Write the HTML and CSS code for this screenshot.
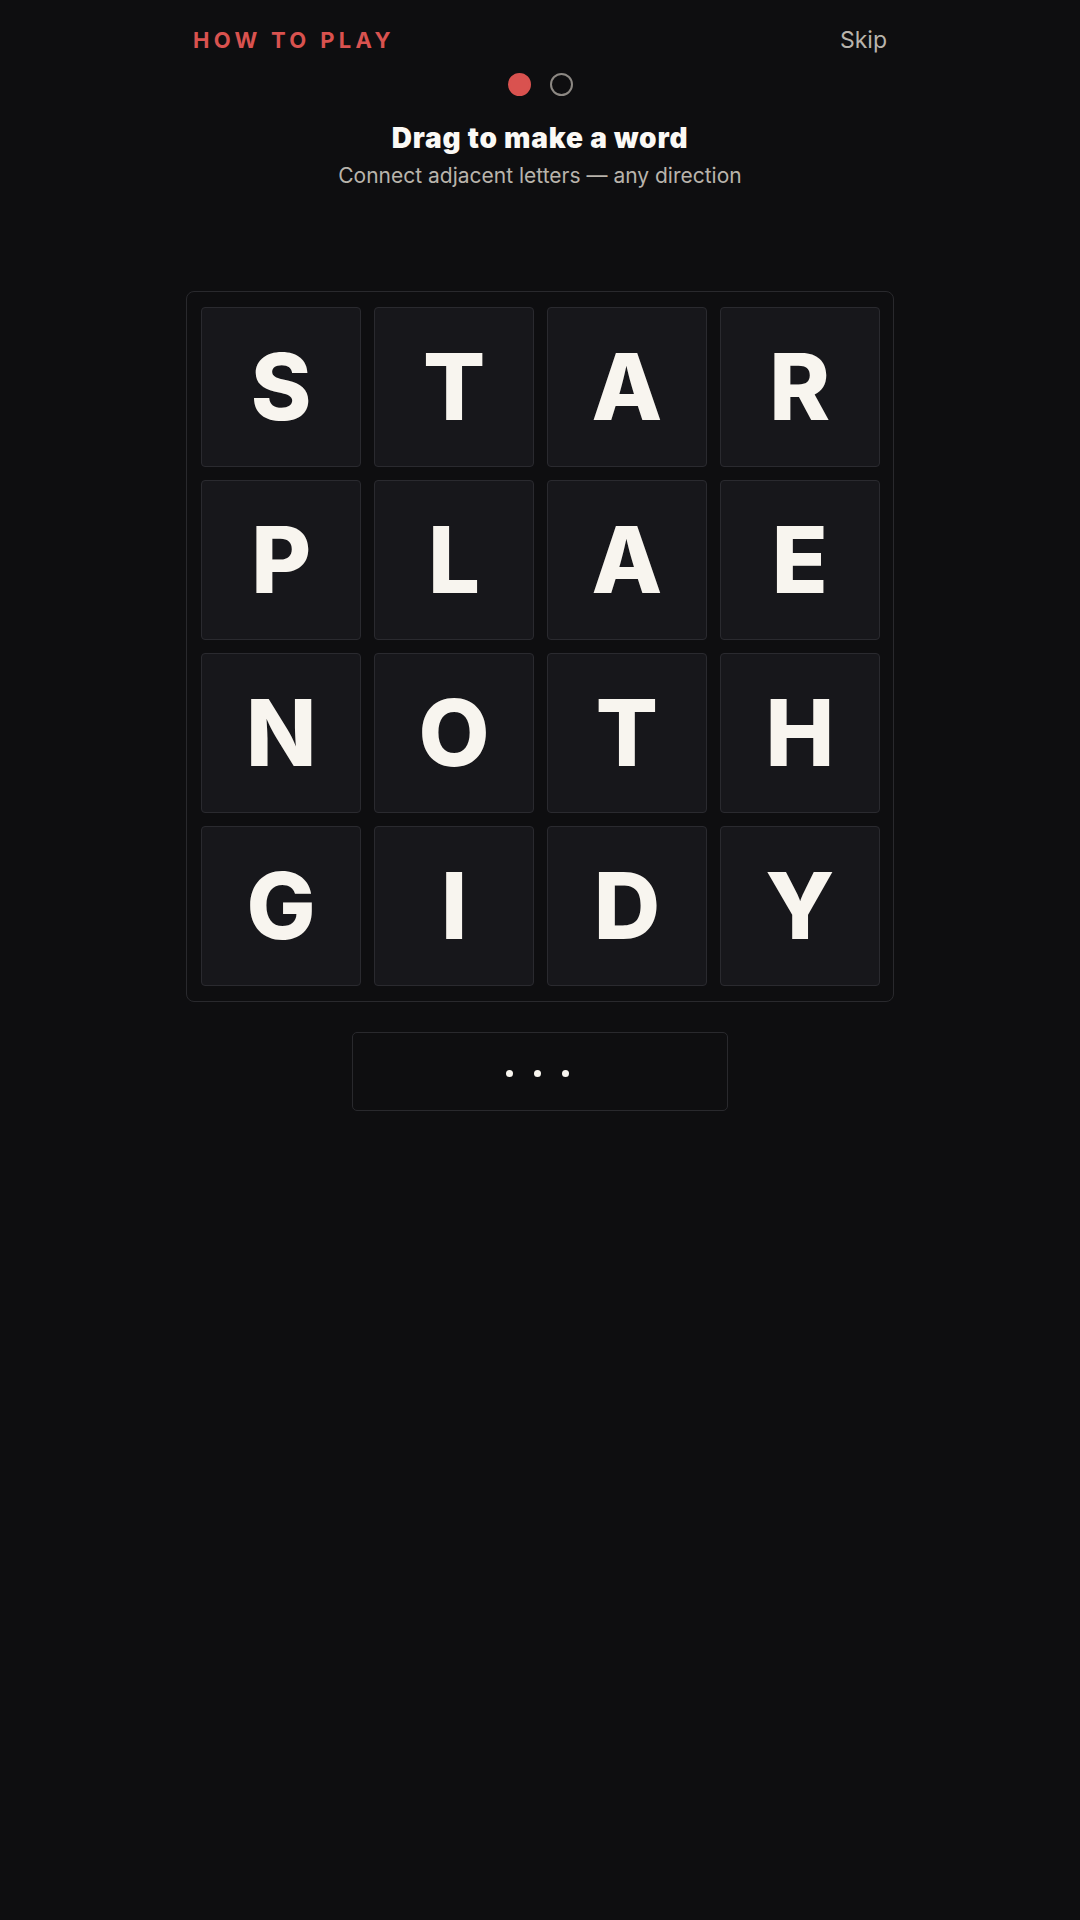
FILE: index.html
```html
<!DOCTYPE html>
<html lang="en">
<head>
<meta charset="utf-8">
<title>How to play</title>
<link rel="stylesheet" href="styles.css">
</head>
<body>
<main class="page">
  <header class="top">
    <span class="label">HOW TO PLAY</span>
    <span class="skip">Skip</span>
  </header>
  <div class="steps">
    <span class="step step-on"></span>
    <span class="step"></span>
  </div>
  <h1 class="title">Drag to make a word</h1>
  <p class="subtitle">Connect adjacent letters — any direction</p>
  <section class="board">
    <div class="tile">S</div><div class="tile">T</div><div class="tile">A</div><div class="tile">R</div>
    <div class="tile">P</div><div class="tile">L</div><div class="tile">A</div><div class="tile">E</div>
    <div class="tile">N</div><div class="tile">O</div><div class="tile">T</div><div class="tile">H</div>
    <div class="tile">G</div><div class="tile">I</div><div class="tile">D</div><div class="tile">Y</div>
  </section>
  <div class="word">
    <span class="dot"></span><span class="dot"></span><span class="dot"></span>
  </div>
</main>
</body>
</html>
```
FILE: styles.css
```css
html, body {
  margin: 0;
  padding: 0;
  background: #0e0e10;
}
body {
  font-family: Inter, "Noto Sans", "Liberation Sans", sans-serif;
  color: #f8f5ef;
  min-height: 1920px;
}
.page {
  width: 708px;
  margin: 0 auto;
  display: flex;
  flex-direction: column;
  align-items: center;
}
.top {
  align-self: stretch;
  display: flex;
  justify-content: space-between;
  align-items: center;
  padding: 28px 7px 0 7px;
  height: 24px;
}
.label {
  font-size: 22px;
  line-height: 22px;
  font-weight: 700;
  letter-spacing: 4.3px;
  color: #d9524f;
}
.skip {
  font-size: 23px;
  line-height: 24px;
  font-weight: 400;
  color: #b9b4ac;
}
.steps {
  display: flex;
  gap: 19px;
  margin-top: 21px;
}
.step {
  width: 23px;
  height: 23px;
  box-sizing: border-box;
  border-radius: 50%;
  border: 2px solid #8c8883;
}
.step-on {
  background: #d9524f;
  border-color: #d9524f;
}
.title {
  margin: 25px 0 0;
  font-size: 28px;
  line-height: 34px;
  font-weight: 900;
  letter-spacing: 0.8px;
  color: #fbf9f5;
}
.subtitle {
  margin: 7px 0 0;
  font-size: 21px;
  line-height: 28px;
  font-weight: 400;
  color: #b9b4ac;
}
.board {
  margin-top: 101px;
  align-self: stretch;
  box-sizing: border-box;
  border: 1px solid #29292d;
  border-radius: 8px;
  padding: 15px 13px 15px 14px;
  display: grid;
  grid-template-columns: repeat(4, 1fr);
  gap: 12.5px;
}
.tile {
  aspect-ratio: 1 / 1;
  box-sizing: border-box;
  background: #17171b;
  border: 1px solid #2a2a2f;
  border-radius: 4px;
  display: flex;
  align-items: center;
  justify-content: center;
  font-size: 92px;
  font-weight: 800;
  color: #f8f5ef;
  line-height: 1;
}
.word {
  margin-top: 30px;
  width: 376px;
  height: 79px;
  box-sizing: border-box;
  border: 1px solid #29292d;
  border-radius: 5px;
  display: flex;
  align-items: center;
  justify-content: center;
  gap: 21px;
  padding-top: 4px;
  padding-right: 6px;
}
.dot {
  width: 7px;
  height: 7px;
  border-radius: 50%;
  background: #f8f5ef;
}
```
